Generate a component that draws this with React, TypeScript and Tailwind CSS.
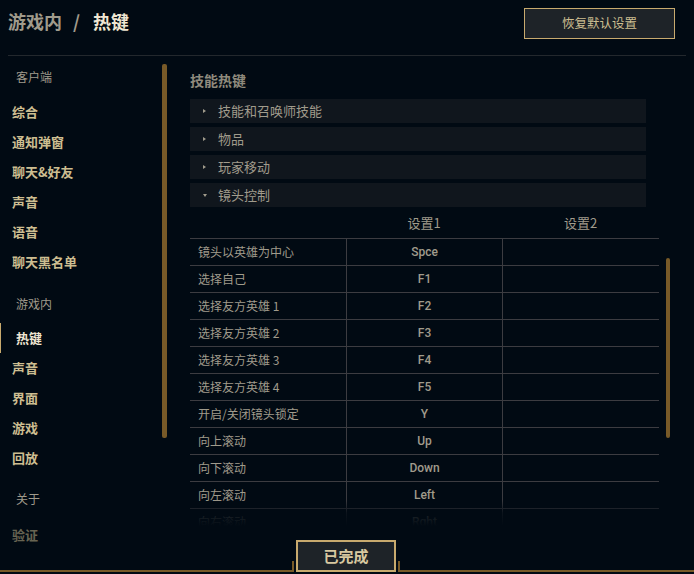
import React from "react";

const sideItemsClient = ["综合", "通知弹窗", "聊天&好友", "声音", "语音", "聊天黑名单"];
const sideItemsGame = ["声音", "界面", "游戏", "回放"];
const accordions = [
  { label: "技能和召唤师技能", open: false },
  { label: "物品", open: false },
  { label: "玩家移动", open: false },
  { label: "镜头控制", open: true },
];
const rows: [string, string][] = [
  ["镜头以英雄为中心", "Spce"],
  ["选择自己", "F1"],
  ["选择友方英雄 1", "F2"],
  ["选择友方英雄 2", "F3"],
  ["选择友方英雄 3", "F4"],
  ["选择友方英雄 4", "F5"],
  ["开启/关闭镜头锁定", "Y"],
  ["向上滚动", "Up"],
  ["向下滚动", "Down"],
  ["向左滚动", "Left"],
  ["向右滚动", "Rght"],
];

export default function App() {
  return (
    <div className="w-[694px] h-[574px] bg-[#010a13] flex flex-col overflow-hidden font-['Noto_Sans_CJK_SC',sans-serif]">
      {/* Header */}
      <div className="mx-[8px] h-[56px] shrink-0 border-b border-[#23282d] flex items-start justify-between">
        <div className="pt-[9px] h-[34px] leading-[24px] text-[18px] font-bold flex">
          <span className="text-[#a09b8c]">游戏内</span>
          <span className="text-[#a09b8c] ml-[11px] mr-[13px]">/</span>
          <span className="text-[#f0e6d2]">热键</span>
        </div>
        <div className="mt-[8px] mr-[11px] w-[151px] h-[31px] bg-[#1e2328] border border-[#c8aa6e] flex items-center justify-center text-[12.5px] text-[#cdbe91]">
          恢复默认设置
        </div>
      </div>

      {/* Body */}
      <div className="h-[484px] shrink-0 flex">
        {/* Sidebar */}
        <div className="w-[190px] shrink-0 flex">
          <div className="w-[162px] flex flex-col">
            <div className="shrink-0 mt-[6px] h-[30px] pl-[16px] flex items-center text-[12px] text-[#a09b8c]">客户端</div>
            <div className="shrink-0 mt-[5px] flex flex-col">
              {sideItemsClient.map((t) => (
                <div key={t} className="shrink-0 h-[30px] pl-[12px] flex items-center text-[13px] font-bold text-[#cdbe91]">
                  {t}
                </div>
              ))}
            </div>
            <div className="shrink-0 mt-[12px] h-[30px] pl-[16px] flex items-center text-[12px] text-[#a09b8c]">游戏内</div>
            <div className="shrink-0 mt-[4px] h-[30px] pl-[15px] border-l border-[#c8aa6e] flex items-center text-[13px] font-bold text-[#f0e6d2]">
              热键
            </div>
            <div className="shrink-0 flex flex-col">
              {sideItemsGame.map((t) => (
                <div key={t} className="shrink-0 h-[30px] pl-[12px] flex items-center text-[13px] font-bold text-[#cdbe91]">
                  {t}
                </div>
              ))}
            </div>
            <div className="shrink-0 mt-[11px] h-[30px] pl-[16px] flex items-center text-[12px] text-[#a09b8c]">关于</div>
            <div className="shrink-0 mt-[6px] h-[30px] pl-[12px] flex items-center text-[13px] font-bold text-[#cdbe91] opacity-50">
              验证
            </div>
          </div>
          <div className="w-[5px]">
            <div className="mt-[8px] h-[374px] w-[5px] rounded-[2px] bg-[#785a28]" />
          </div>
        </div>

        {/* Content */}
        <div className="flex">
          <div className="w-[469px] flex flex-col">
            <div className="shrink-0 pt-[14px] h-[34px] leading-[20px] text-[14px] font-bold text-[#8f8a7d]">技能热键</div>
            <div className="shrink-0 mt-[9px] w-[456px] flex flex-col gap-[4px]">
              {accordions.map((a) => (
                <div key={a.label} className="h-[24px] bg-[#10161d] flex items-center pl-[12px]">
                  <div className="w-[5px] flex justify-center">
                    {a.open ? (
                      <div className="w-0 h-0 border-x-[2.5px] border-x-transparent border-t-[3px] border-t-[#a09b8c]" />
                    ) : (
                      <div className="w-0 h-0 border-y-[2.5px] border-y-transparent border-l-[3px] border-l-[#a09b8c]" />
                    )}
                  </div>
                  <span className="ml-[11px] text-[13px] text-[#a09b8c]">{a.label}</span>
                </div>
              ))}
            </div>
            <div className="shrink-0 h-[31px] flex items-center text-[13px] text-[#a09b8c]">
              <div className="w-[156px]" />
              <div className="w-[156px] text-center">设置1</div>
              <div className="w-[157px] text-center">设置2</div>
            </div>
            <div className="shrink-0 relative h-[288px] overflow-hidden border-t border-[#3c3c41]">
              {rows.map(([label, key]) => (
                <div key={label} className="h-[27px] flex border-b border-[#3c3c41]">
                  <div className="w-[156px] pl-[8px] flex items-center text-[12px] text-[#a09b8c]">{label}</div>
                  <div className="w-[156px] border-l border-[#3c3c41] flex items-center justify-center text-[12px] font-medium text-[#a09b8c] font-['Roboto',sans-serif]">
                    {key}
                  </div>
                  <div className="w-[157px] border-l border-[#3c3c41]" />
                </div>
              ))}
              <div className="absolute left-0 right-0 bottom-0 h-[26px] bg-gradient-to-b from-[#010a13]/0 via-[#010a13]/80 to-[#010a13]" />
            </div>
          </div>
          <div className="ml-[7px] w-[4px]">
            <div className="mt-[202px] h-[180px] w-[4px] rounded-[2px] bg-[#785a28]" />
          </div>
        </div>
      </div>

      {/* Footer */}
      <div className="h-[34px] shrink-0 flex items-end pb-[2px]">
        <div className="w-[294px] h-[11px] border-b-2 border-r-2 border-[#785a28]" />
        <div className="ml-[2px] w-[100px] h-[32px] bg-[#1e2328] border-2 border-[#c8aa6e] flex items-center justify-center text-[15px] font-bold text-[#d8c8a0]">
          已完成
        </div>
        <div className="ml-[2px] flex-1 h-[11px] border-b-2 border-l-2 border-[#785a28]" />
      </div>
    </div>
  );
}
